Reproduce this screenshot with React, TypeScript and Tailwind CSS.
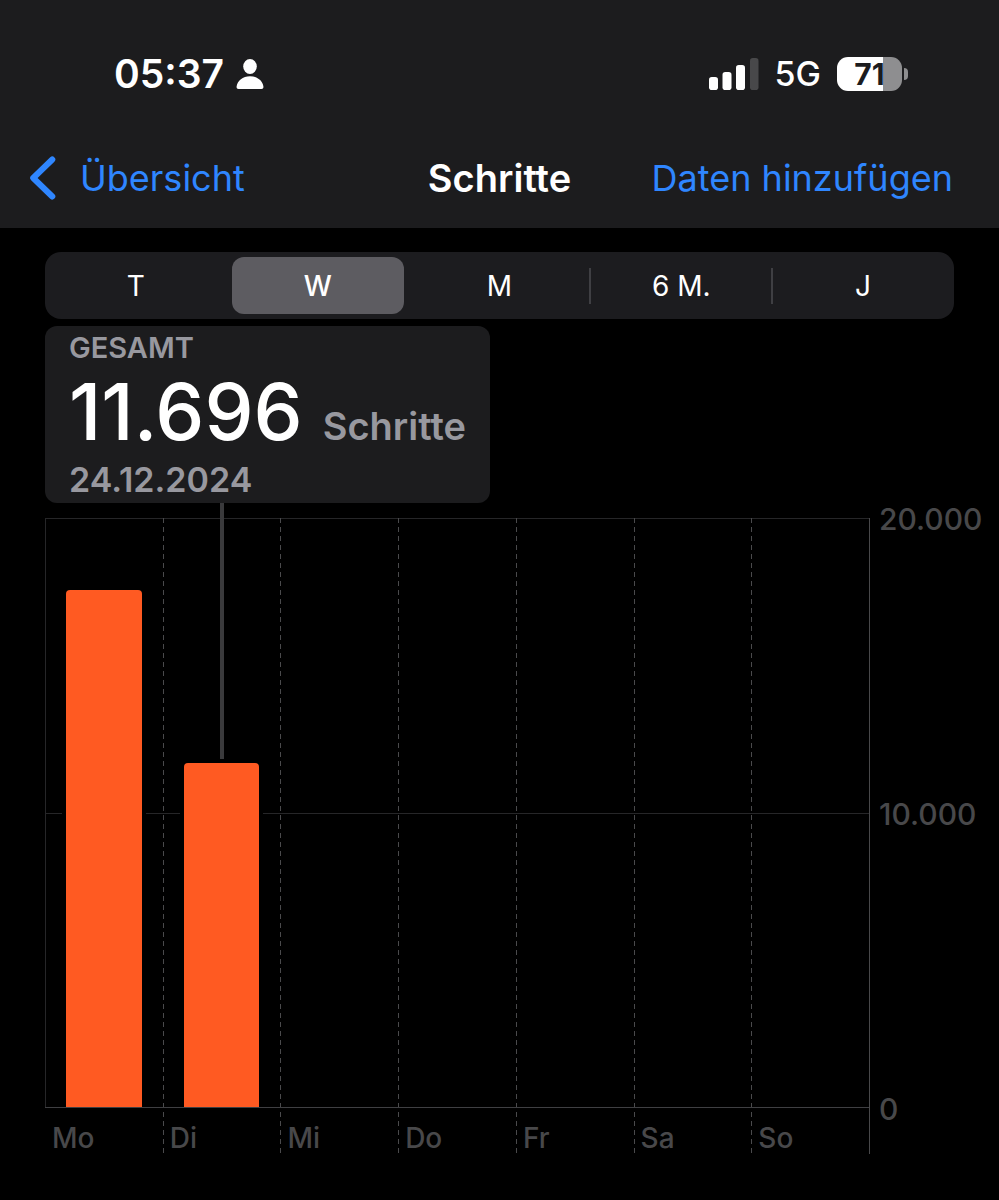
import React, { useState } from 'react';

const ranges = ['T', 'W', 'M', '6 M.', 'J'];

const days = [
  { label: 'Mo', steps: 17550 },
  { label: 'Di', steps: 11696, selected: true },
  { label: 'Mi', steps: 0 },
  { label: 'Do', steps: 0 },
  { label: 'Fr', steps: 0 },
  { label: 'Sa', steps: 0 },
  { label: 'So', steps: 0 },
];

const MAX_STEPS = 20000;

const StatusBar: React.FC = () => (
  <div className="flex items-center justify-between pt-[52px] pr-[91px] pl-[114px]">
    <div className="flex items-center gap-3 text-white">
      <span className="text-[39px] leading-11 font-semibold">05:37</span>
      <svg width="28" height="30" viewBox="0 0 28 30" fill="currentColor">
        <ellipse cx="14" cy="7.5" rx="6.8" ry="7.5" />
        <path d="M2.6 30C1 30 .4 29 .6 27.5C1.3 21.5 6.8 17.2 14 17.2C21.2 17.2 26.7 21.5 27.4 27.5C27.6 29 27 30 25.4 30Z" />
      </svg>
    </div>
    <div className="flex items-center text-white">
      <svg width="50" height="32" viewBox="0 0 50 32" fill="currentColor">
        <rect x="0" y="19" width="9" height="13" rx="2.8" />
        <rect x="13.5" y="14" width="9" height="18" rx="2.8" />
        <rect x="27" y="7" width="9" height="25" rx="2.8" />
        <rect x="41" y="0" width="8.5" height="32" rx="2.8" fill="#48484a" />
      </svg>
      <span className="ml-4 text-[34px] leading-11 font-medium">5G</span>
      <div className="ml-4 flex items-center gap-0.5">
        <div className="flex h-[34px] w-[65px] items-center justify-center rounded-[11px] bg-[linear-gradient(to_right,#ffffff_71%,#8e8e90_71%)] text-[30px] leading-none font-bold text-[#1c1c1e]">
          71
        </div>
        <div className="h-3 w-1 rounded-r-full bg-[#8e8e90]" />
      </div>
    </div>
  </div>
);

const NavBar: React.FC = () => (
  <nav className="grid grid-cols-[1fr_auto_1fr] items-center px-[30px] pt-[60px] pb-[28px] text-[38px] leading-11">
    <a href="#" className="flex items-center gap-6 text-[36px] text-[#2f86ff]">
      <svg width="26" height="44" viewBox="0 0 26 44" fill="none" stroke="currentColor" strokeWidth="6" strokeLinecap="round" strokeLinejoin="round">
        <path d="M22.3 3.5L3.2 22L22.3 40.5" />
      </svg>
      Übersicht
    </a>
    <h1 className="font-semibold text-white">Schritte</h1>
    <button className="mr-4 justify-self-end text-[36px] whitespace-nowrap text-[#2f86ff]">Daten hinzufügen</button>
  </nav>
);

const StepsChart: React.FC = () => (
  <div className="mt-[15px] flex text-[28px] leading-8 font-medium text-[#48484a]">
    <div className="relative flex flex-1 border-r border-[#48484a]">
      {/* horizontal grid */}
      <div className="absolute inset-x-0 top-0 h-[590px] border-t border-l border-[#262628]" />
      <div className="absolute inset-x-0 top-[295px] h-px bg-[#262628]" />
      {days.map((day, idx) => (
        <div key={day.label} className="relative flex-1">
          {idx > 0 && (
            <div className="absolute inset-y-0 left-0 w-px bg-[repeating-linear-gradient(to_bottom,#4a4a4c_0_5px,transparent_5px_9px)]" />
          )}
          <div className="relative flex h-[590px] items-end px-[21px]">
            {day.selected && <div className="absolute -top-[15px] bottom-0 left-1/2 w-1 -translate-x-1/2 bg-[#3a3a3c]" />}
            {day.steps > 0 && (
              <div
                className="relative w-full rounded-t-sm bg-[#ff5a22] ring-4 ring-black"
                style={{ height: `${(day.steps / MAX_STEPS) * 100}%` }}
              />
            )}
          </div>
          <div className="pt-3.5 pl-[7px]">{day.label}</div>
        </div>
      ))}
      <div className="absolute inset-x-0 top-[589px] h-px bg-[#3f3f42]" />
    </div>
    <div className="-mt-[15px] flex h-[622px] w-[129px] flex-col justify-between pl-[9px] text-[30px]">
      <span>20.000</span>
      <span>10.000</span>
      <span>0</span>
    </div>
  </div>
);

const App: React.FC = () => {
  const [range, setRange] = useState('W');

  return (
    <div className="min-h-screen bg-black font-['Inter',sans-serif]">
      <header className="bg-[#1c1c1e]">
        <StatusBar />
        <NavBar />
      </header>

      <main className="pt-6 pl-[45px]">
        <div className="mr-[45px] grid h-[67px] grid-cols-5 rounded-2xl bg-[#1c1c1f]">
          {ranges.map((item, idx) => (
            <div key={item} className="relative flex p-[5px]">
              {idx > 2 && <div className="absolute top-4 -left-px h-9 w-0.5 bg-[#3f3f43]" />}
              <button
                aria-pressed={range === item}
                onClick={() => setRange(item)}
                className={`flex-1 rounded-xl text-[28px] leading-8 text-white ${range === item ? 'bg-[#5d5c61] font-medium' : ''}`}
              >
                {item}
              </button>
            </div>
          ))}
        </div>

        <section className="mt-[7px] h-[177px] w-fit rounded-xl bg-[#1c1c1e] px-6 pt-1.5 font-semibold text-[#98989f]">
          <h2 className="text-[29px] leading-8">GESAMT</h2>
          <p className="flex items-baseline gap-5">
            <span className="text-[78px] leading-[96px] font-medium text-white">11.696</span>
            <span className="text-[38px]">Schritte</span>
          </p>
          <p className="text-[34px] leading-10">24.12.2024</p>
        </section>

        <StepsChart />
      </main>
    </div>
  );
};

export default App;
